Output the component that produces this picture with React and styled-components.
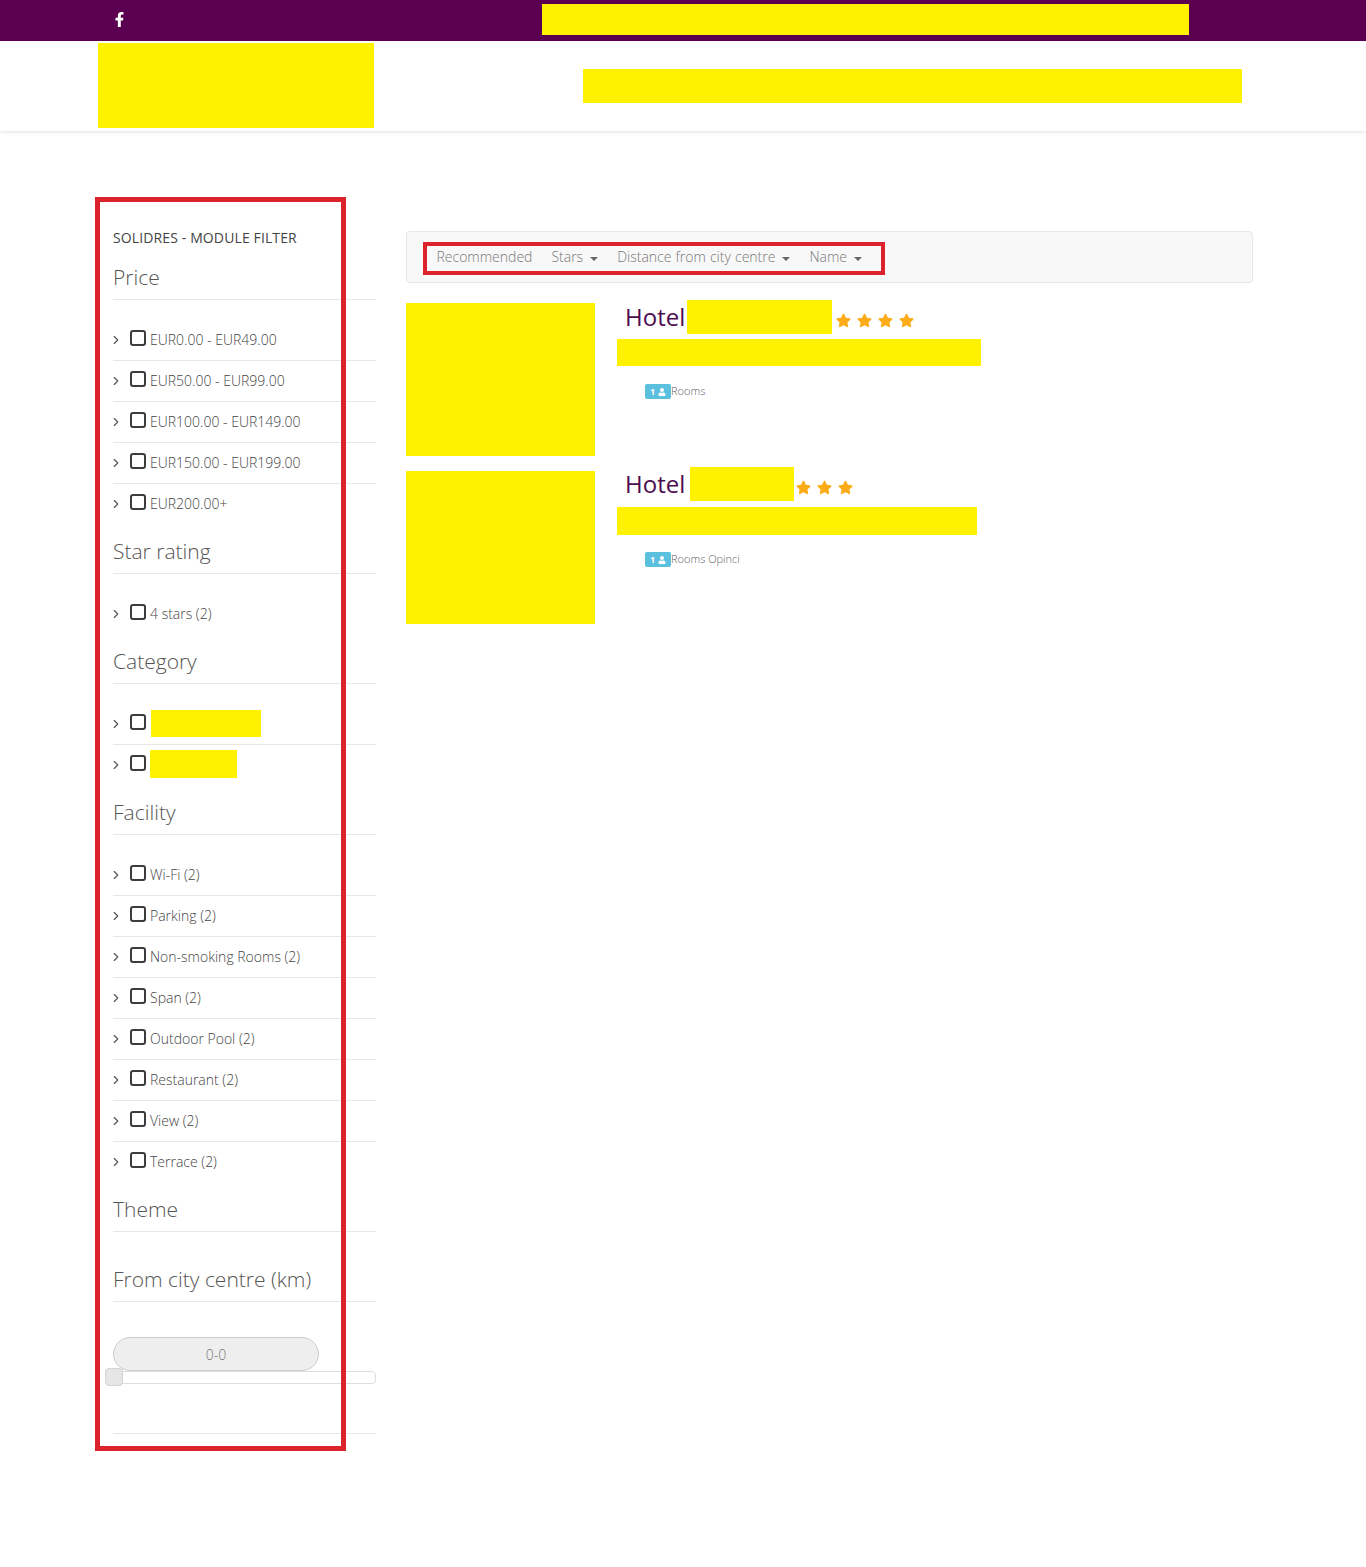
import React from 'react'
import styled, { createGlobalStyle } from 'styled-components'
import { FaFacebookF, FaStar, FaUser } from 'react-icons/fa'
import { ChevronRight } from 'lucide-react'

const GlobalStyle = createGlobalStyle`
  * { box-sizing: border-box; }
  body {
    margin: 0;
    background: #fff;
    font-family: "Open Sans", "Liberation Sans", sans-serif;
    font-weight: 300;
    color: #555;
  }
`

const Page = styled.div`
  min-height: 1567px;
`

const TopBar = styled.div`
  height: 41px;
  background: #5b0051;
  display: flex;
  align-items: center;
  padding: 0 0 2px 112px;
  color: #fff;
  font-size: 15px;
`

const Redact = styled.div`
  width: ${p => p.$w}px;
  height: ${p => p.$h}px;
  margin-left: ${p => p.$ml || 0}px;
  background: #fff200;
  flex-shrink: 0;
`

const TopBanner = styled(Redact)`
  margin-left: 415px;
`

const Header = styled.header`
  height: 90px;
  display: flex;
  align-items: center;
  padding-left: 98px;
  box-shadow: 0 1px 4px rgba(0, 0, 0, 0.12);
`

const Logo = styled(Redact)`
  margin-bottom: 1px;
`

const HeaderBanner = styled(Redact)`
  margin-left: 209px;
`

const Content = styled.div`
  display: flex;
  gap: 30px;
  padding: 97px 0 0 113px;
`

const Sidebar = styled.aside`
  position: relative;
  width: 263px;
  flex-shrink: 0;
`

const SidebarMark = styled.div`
  position: absolute;
  z-index: 2;
  left: -18px;
  top: -31px;
  width: 251px;
  height: 1254px;
  border: 5px solid #dc232d;
  pointer-events: none;
`

const ModuleTitle = styled.div`
  font-size: 14px;
  font-weight: 400;
  line-height: 20px;
  letter-spacing: 0.12px;
  color: #444;
  margin-bottom: 2px;
`

const FilterHeading = styled.h3`
  margin: 0;
  padding: 15px 0 10px;
  font-size: 21px;
  font-weight: 300;
  line-height: 24px;
  color: #555;
  border-bottom: 1px solid #e6e6e6;
`

const FilterList = styled.ul`
  list-style: none;
  margin: 20px 0 0;
  padding: 0;
`

const FilterRow = styled.li`
  height: 40px;
  display: flex;
  align-items: center;
  padding-bottom: 2px;
  font-size: 14px;
  color: #444;
  & + & {
    height: 41px;
    border-top: 1px solid #e6e6e6;
  }
`

const Arrow = styled(ChevronRight)`
  width: 14px;
  height: 14px;
  margin: 2px 7.5px 0 -4.5px;
  color: #555;
  flex-shrink: 0;
`

const Checkbox = styled.span`
  width: 16px;
  height: 16px;
  border: 2px solid #3c3c3c;
  border-radius: 3px;
  margin: -3px 4px 0 0;
  flex-shrink: 0;
`

const RangeOutput = styled.div`
  width: 206px;
  height: 34px;
  margin-top: 35px;
  border: 1px solid #ccc;
  border-radius: 17px;
  background: #eee;
  color: #777;
  font-size: 14px;
  text-align: center;
  line-height: 33px;
`

const Track = styled.div`
  position: relative;
  height: 13px;
  border: 1px solid #ddd;
  border-radius: 4px;
  background: #fff;
`

const Handle = styled.span`
  position: absolute;
  left: -9px;
  top: -4px;
  width: 18px;
  height: 18px;
  border: 1px solid #d3d3d3;
  border-radius: 4px;
  background: #e6e6e6;
`

const SidebarFoot = styled.div`
  margin-top: 49px;
  border-top: 1px solid #e6e6e6;
`

const Main = styled.main`
  width: 847px;
  padding-top: 3px;
`

const SortBar = styled.div`
  height: 52px;
  background: #f8f8f8;
  border: 1px solid #e7e7e7;
  border-radius: 4px;
  padding: 10px 0 0 16px;
  margin-bottom: 20px;
`

const SortMenu = styled.nav`
  width: 462px;
  height: 33px;
  border: 4px solid #dc232d;
  display: flex;
  align-items: center;
  padding: 0 0 4px 9.5px;
`

const SortItem = styled.span`
  display: flex;
  align-items: center;
  font-size: 14px;
  word-spacing: 0.5px;
  color: #777;
  margin-right: 19px;
`

const Caret = styled.span`
  width: 0;
  height: 0;
  margin: 4px 0 0 7px;
  border-top: 4px solid #666;
  border-left: 4px solid transparent;
  border-right: 4px solid transparent;
`

const HotelCard = styled.article`
  display: flex;
  gap: 22px;
  margin-bottom: 15px;
`

const HotelInfo = styled.div`
  margin-top: ${p => p.$lift}px;
`

const TitleRow = styled.div`
  display: flex;
  align-items: center;
  height: 34px;
  padding-left: 8px;
`

const HotelName = styled.h2`
  margin: -2px 2px 0 0;
  font-size: 24px;
  font-weight: 400;
  color: #4d0c50;
`

const Stars = styled.div`
  display: flex;
  gap: 6px;
  margin: 6px 0 0 ${p => p.$ml}px;
  color: #fbac18;
  font-size: 15px;
`

const AddressLine = styled(Redact)`
  margin-top: ${p => p.$mt}px;
`

const RoomsRow = styled.div`
  display: flex;
  align-items: center;
  margin: ${p => p.$mt}px 0 0 28px;
  font-size: 11px;
  color: #666;
`

const RoomsLabel = styled.span`
  margin-top: -2px;
`

const Badge = styled.span`
  width: 26px;
  height: 15px;
  border-radius: 2px;
  background: #5bc0de;
  color: #fff;
  font-size: 9px;
  font-weight: 700;
  display: flex;
  align-items: center;
  justify-content: center;
  gap: 3px;
`

const filters = [
  { title: 'Price', rows: ['EUR0.00 - EUR49.00', 'EUR50.00 - EUR99.00', 'EUR100.00 - EUR149.00', 'EUR150.00 - EUR199.00', 'EUR200.00+'] },
  { title: 'Star rating', rows: ['4 stars (2)'] },
  { title: 'Category', rows: [{ w: 110, h: 27, ml: 1 }, { w: 87, h: 28, ml: 0 }] },
  { title: 'Facility', rows: ['Wi-Fi (2)', 'Parking (2)', 'Non-smoking Rooms (2)', 'Span (2)', 'Outdoor Pool (2)', 'Restaurant (2)', 'View (2)', 'Terrace (2)'] },
  { title: 'Theme', rows: [] },
  { title: 'From city centre (km)', rows: [] },
]

const hotels = [
  { lift: -3, nameGap: 0, nameW: 145, stars: 4, starGap: 4, lineTop: 5, lineW: 364, lineH: 27, roomsTop: 18, rooms: 'Rooms' },
  { lift: -4, nameGap: 3, nameW: 104, stars: 3, starGap: 2, lineTop: 6, lineW: 360, lineH: 28, roomsTop: 17, rooms: 'Rooms Opinci' },
]

function App() {
  return (
    <Page>
      <GlobalStyle />
      <TopBar>
        <FaFacebookF />
        <TopBanner $w={647} $h={31} />
      </TopBar>
      <Header>
        <Logo $w={276} $h={85} />
        <HeaderBanner $w={659} $h={34} />
      </Header>
      <Content>
        <Sidebar>
          <SidebarMark />
          <ModuleTitle>SOLIDRES - MODULE FILTER</ModuleTitle>
          {filters.map(filter => (
            <section key={filter.title}>
              <FilterHeading>{filter.title}</FilterHeading>
              <FilterList>
                {filter.rows.map((row, i) => (
                  <FilterRow key={i}>
                    <Arrow />
                    <Checkbox />
                    {typeof row === 'string' ? row : <Redact $w={row.w} $h={row.h} $ml={row.ml} />}
                  </FilterRow>
                ))}
              </FilterList>
            </section>
          ))}
          <RangeOutput>0-0</RangeOutput>
          <Track>
            <Handle />
          </Track>
          <SidebarFoot />
        </Sidebar>
        <Main>
          <SortBar>
            <SortMenu>
              <SortItem>Recommended</SortItem>
              <SortItem>Stars<Caret /></SortItem>
              <SortItem>Distance from city centre<Caret /></SortItem>
              <SortItem>Name<Caret /></SortItem>
            </SortMenu>
          </SortBar>
          {hotels.map((hotel, i) => (
            <HotelCard key={i}>
              <Redact $w={189} $h={153} />
              <HotelInfo $lift={hotel.lift}>
                <TitleRow>
                  <HotelName>Hotel</HotelName>
                  <Redact $w={hotel.nameW} $h={34} $ml={hotel.nameGap} />
                  <Stars $ml={hotel.starGap}>
                    {Array.from({ length: hotel.stars }, (_, n) => <FaStar key={n} />)}
                  </Stars>
                </TitleRow>
                <AddressLine $w={hotel.lineW} $h={hotel.lineH} $mt={hotel.lineTop} />
                <RoomsRow $mt={hotel.roomsTop}>
                  <Badge>1<FaUser size={8} /></Badge>
                  <RoomsLabel>{hotel.rooms}</RoomsLabel>
                </RoomsRow>
              </HotelInfo>
            </HotelCard>
          ))}
        </Main>
      </Content>
    </Page>
  )
}

export default App
